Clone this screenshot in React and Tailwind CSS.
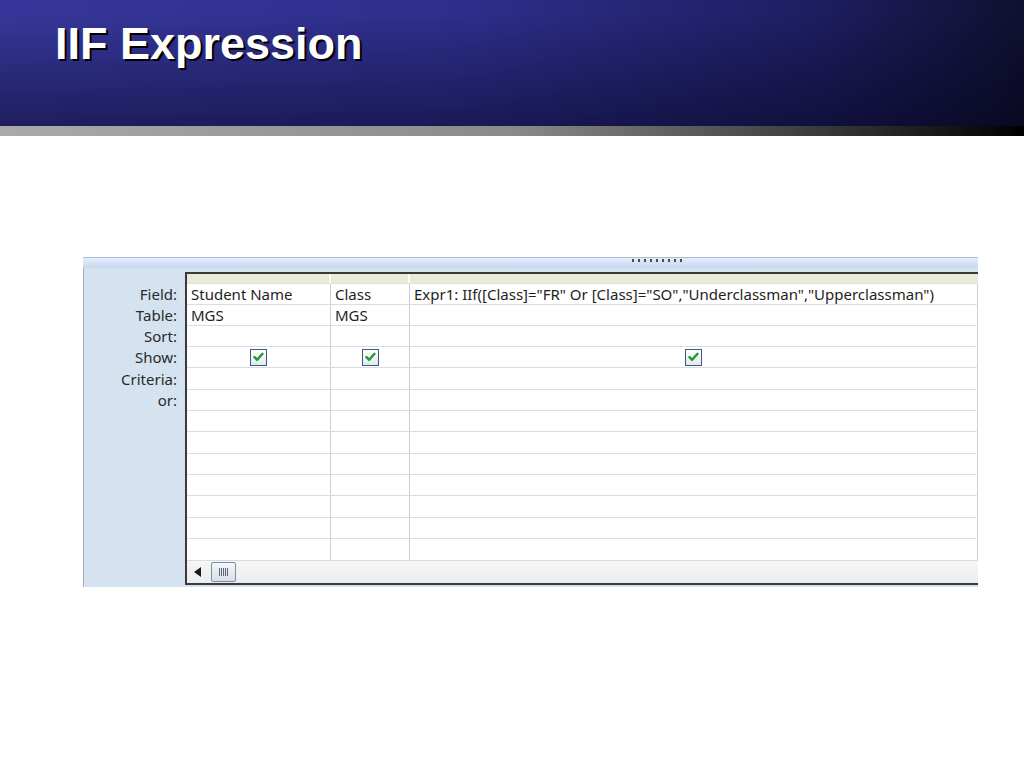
import React from "react";

const rowHeights = ["h-[21px]","h-[21px]","h-[21px]","h-[21px]","h-[22px]","h-[21px]","h-[21px]","h-[22px]","h-[21px]","h-[21px]","h-[22px]","h-[21px]","h-[22px]"];
const labels = ["Field:","Table:","Sort:","Show:","Criteria:","or:"];

function Check() {
  return (
    <div className="w-[17px] h-[17px] border-[1.5px] border-[#3f5a7c] bg-[linear-gradient(to_bottom,#ffffff,#e4e8ee)] flex items-center justify-center">
      <svg width="11" height="10" viewBox="0 0 11 10">
        <path d="M1.5 5.2 L4.2 7.8 L9.5 1.8" fill="none" stroke="#1f9a2a" strokeWidth="2.4" strokeLinecap="round" strokeLinejoin="round" />
      </svg>
    </div>
  );
}

const data = [
  ["Student Name","Class",'Expr1: IIf([Class]="FR" Or [Class]="SO","Underclassman","Upperclassman")'],
  ["MGS","MGS",""],
  ["","",""],
  ["check","check","check"],
];

function Cell({ v, cls }) {
  return (
    <div className={`${cls} h-full border-r border-[#c7cfdf] flex items-center px-[4px] overflow-hidden whitespace-nowrap`}>
      {v === "check" ? <div className="w-full flex justify-center"><Check /></div> : v}
    </div>
  );
}

export default function App() {
  return (
    <div className="w-[1024px] h-[768px] bg-white relative overflow-hidden" style={{ fontFamily: "Arial" }}>
      <div className="h-[126px] bg-[linear-gradient(to_bottom,rgba(0,0,0,0)_10%,rgba(0,0,20,0.45)),linear-gradient(to_right,#37379b,#2e2e8c_45%,#1e1d60_80%,#101030)] flex items-start">
        <h1 className="ml-[55px] mt-[21px] text-[45px] font-bold text-white leading-none [text-shadow:2px_2px_0_#000]" style={{ fontFamily: '"Liberation Sans", Arial, sans-serif' }}>
          IIF Expression
        </h1>
      </div>
      <div className="h-[10px] bg-[linear-gradient(to_right,#aaaaaa,#8a8a8a_50%,#3a3a3a_80%,#000000)]" />

      <div className="pl-[83px] pt-[121px]" style={{ fontFamily: '"Noto Sans", "Open Sans", sans-serif' }}>
        <div className="w-[895px] h-[330px] flex flex-col text-[15px] text-[#1e1e1e]">
          <div className="h-[11px] border-t border-[#a9c0da] bg-[linear-gradient(to_bottom,#e6eefa,#c3d7ee)] flex items-start">
            <div className="ml-[549px] mt-[1px] flex gap-[4px]">
              {Array.from({ length: 9 }).map((_, i) => (
                <span key={i} className="w-[2px] h-[3px] bg-[#4a4a4a]" />
              ))}
            </div>
          </div>
          <div className="flex flex-1 bg-[#d5e3f0] border-l border-[#a5b0bc]">
            <div className="w-[101px] pt-[16px] flex flex-col text-[#2a2a2a]">
              {labels.map((l, i) => (
                <div key={l} className={`${rowHeights[i]} flex items-center justify-end pr-[8px]`}>{l}</div>
              ))}
            </div>
            <div className="flex-1 mt-[4px] mb-[2px] bg-white border-l-2 border-t-2 border-b-2 border-[#3a3a3a] flex flex-col">
              <div className="h-[10px] bg-[#e8ebd7] flex border-b border-[#e0e3d0]">
                <div className="w-[144px] border-r-2 border-white" />
                <div className="w-[79px] border-r-2 border-white" />
                <div className="flex-1" />
              </div>
              {rowHeights.map((h, i) => {
                const r = data[i] || ["","",""];
                return (
                  <div key={i} className={`${h} flex border-b border-[#d9dde3]`}>
                    <Cell v={r[0]} cls="w-[144px]" />
                    <Cell v={r[1]} cls="w-[79px]" />
                    <Cell v={r[2]} cls="flex-1" />
                  </div>
                );
              })}
              <div className="flex-1 bg-[linear-gradient(to_bottom,#f6f6f6,#ececec)] flex items-center">
                <svg width="8" height="10" viewBox="0 0 8 10" className="ml-[7px]">
                  <path d="M7 0 L0 5 L7 10 Z" fill="#1a1a1a" />
                </svg>
                <div className="ml-[9px] w-[25px] h-[20px] rounded-[2px] border border-[#7d8ca3] bg-[linear-gradient(to_bottom,#f4f6fa,#d8dfe9)] flex items-center justify-center gap-[1px]">
                  {Array.from({ length: 5 }).map((_, i) => (
                    <span key={i} className="w-[1px] h-[8px] bg-[#5a6578]" />
                  ))}
                </div>
              </div>
            </div>
          </div>
        </div>
      </div>
    </div>
  );
}
